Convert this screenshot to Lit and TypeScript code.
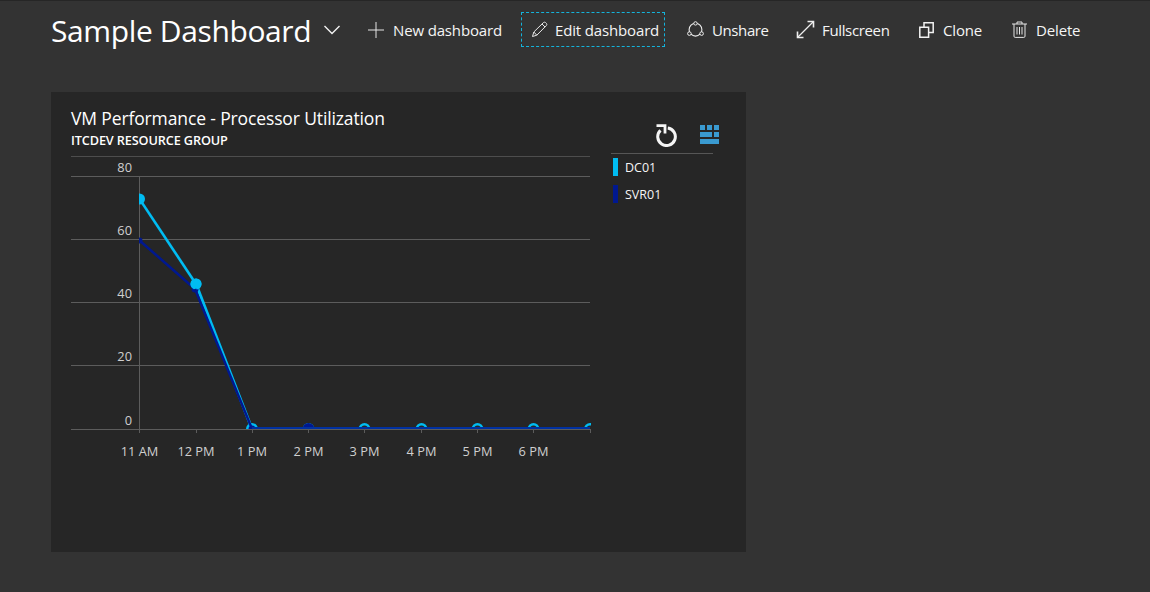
import { LitElement, html, css, svg } from "lit";
import { customElement } from "lit/decorators.js";

const xs = [139.5, 196, 252, 308.5, 364.5, 421.5, 477.5, 533.5, 590];
const labels = ["11 AM", "12 PM", "1 PM", "2 PM", "3 PM", "4 PM", "5 PM", "6 PM"];
const grid = [
  { y: 176, t: "80" },
  { y: 239, t: "60" },
  { y: 302, t: "40" },
  { y: 365, t: "20" },
  { y: 429, t: "0" },
];
const OX = 71;
const OY = 156;
const dc = [[139.5, 199], [196, 284], ...xs.slice(2).map((x) => [x, 429])];
const svr = [[139.5, 240.5], [195, 289], ...xs.slice(2).map((x) => [x, 429])];
const pts = (a: number[][]) => a.map(([x, y]) => `${x - OX},${y - OY}`).join(" ");

@customElement("app-root")
export class AppRoot extends LitElement {
  static styles = css`
    :host {
      display: block;
      width: 1150px;
      height: 592px;
      background: #333333;
      color: #fff;
      font-family: "Open Sans", "Noto Sans", sans-serif;
      overflow: hidden;
      box-sizing: border-box;
      border-top: 1px solid #262626;
    }
    .head {
      display: flex;
      align-items: center;
      height: 57px;
      padding-left: 51px;
      box-sizing: border-box;
    }
    h1 {
      margin: 2px 0 0;
      font-size: 30px;
      font-weight: 400;
      width: 260px;
      white-space: nowrap;
      letter-spacing: -0.38px;
    }
    .chev {
      margin: 0 27px 0 12px;
      display: block;
    }
    .btn {
      display: flex;
      align-items: center;
      height: 35px;
      box-sizing: border-box;
      font-size: 15px;
      color: #f5f5f5;
      white-space: nowrap;
      letter-spacing: -0.15px;
    }
    .btn svg {
      display: block;
      flex: none;
    }
    .btn span {
      display: block;
    }
    .new { width: 153px; gap: 9px; }
    .edit {
      width: 144px;
      padding-left: 9px;
      gap: 7px;
      border: 1px dashed #14b4dc;
      margin-right: 22px;
    }
    .unshare { width: 109px; gap: 8px; letter-spacing: -0.4px; }
    .full { width: 123px; gap: 7px; letter-spacing: -0.35px; }
    .clone { width: 93px; gap: 9px; }
    .del { gap: 9px; }
    .card {
      margin: 34px 0 0 51px;
      width: 695px;
      height: 460px;
      background: #262626;
      display: grid;
      grid-template-columns: 540px 1fr;
      box-sizing: border-box;
      padding-left: 20px;
    }
    .main { display: flex; flex-direction: column; }
    .title {
      margin-top: 14px;
      font-size: 17.5px;
      line-height: 24px;
      letter-spacing: -0.13px;
      white-space: nowrap;
    }
    .sub {
      font-size: 12.7px;
      font-weight: 600;
      line-height: 16px;
      margin-top: 2px;
      letter-spacing: -0.12px;
      white-space: nowrap;
    }
    .plot {
      display: block;
      margin-top: 8px;
    }
    .plot text {
      font-family: "Open Sans", "Noto Sans", sans-serif;
      font-size: 12.8px;
      fill: #cfcfcf;
    }
    .side {
      width: 102px;
      display: flex;
      flex-direction: column;
    }
    .tools {
      display: flex;
      justify-content: flex-end;
      align-items: flex-start;
      gap: 23px;
      height: 61px;
      box-sizing: border-box;
      padding-top: 31px;
      margin-right: -7px;
    }
    .tools .grid { margin-top: 2px; }
    .rule {
      height: 1px;
      background: #565656;
      margin-bottom: 4px;
    }
    .leg {
      display: flex;
      align-items: center;
      gap: 7px;
      height: 18px;
      font-size: 12.5px;
      color: #f5f5f5;
      margin-bottom: 9px;
      padding-left: 2px;
    }
    .swatch { width: 5px; height: 18px; flex: none; }
    .c1 { background: #00bcf2; }
    .c2 { background: #00188f; }
  `;

  render() {
    return html`
      <div class="head">
        <h1>Sample Dashboard</h1>
        <svg class="chev" width="18" height="12" viewBox="0 0 18 12"><path d="M1.5 2 L9 9.5 L16.5 2" fill="none" stroke="#f2f2f2" stroke-width="1.4"/></svg>
        <div class="btn new">
          <svg width="16" height="16" viewBox="0 0 16 16"><path d="M8 0V16M0 8H16" stroke="#e6e6e6" stroke-width="1"/></svg>
          <span>New dashboard</span>
        </div>
        <div class="btn edit">
          <svg width="17" height="17" viewBox="0 0 17 17"><path d="M1.5 15.5 L2.8 11 L12.5 1.5 Q13.5 .8 14.6 1.6 L15.5 2.5 Q16.2 3.6 15.4 4.5 L5.8 14.2 Z M11 3 L14 6 M2.8 11 L5.8 14.2" fill="none" stroke="#e6e6e6" stroke-width="1"/></svg>
          <span>Edit dashboard</span>
        </div>
        <div class="btn unshare">
          <svg width="17" height="17" viewBox="0 0 17 17"><circle cx="8.5" cy="8.7" r="6.4" fill="none" stroke="#eeeeee" stroke-width="1.1"/><circle cx="8.5" cy="2.4" r="1.7" fill="#333" stroke="#eeeeee"/><circle cx="2.4" cy="12.6" r="1.8" fill="#333" stroke="#eeeeee"/><circle cx="14.6" cy="12.6" r="1.8" fill="#333" stroke="#eeeeee"/></svg>
          <span>Unshare</span>
        </div>
        <div class="btn full">
          <svg width="19" height="19" viewBox="0 0 19 19"><path d="M2 17 L17 2" fill="none" stroke="#eeeeee" stroke-width="1.3"/><path d="M11.5 1.5 H17.5 V7.5 M1.5 11.5 V17.5 H7.5" fill="none" stroke="#eeeeee" stroke-width="1.6"/></svg>
          <span>Fullscreen</span>
        </div>
        <div class="btn clone">
          <svg width="15" height="16" viewBox="0 0 15 16"><path d="M5 5 V.8 H14.2 V10.5 H10 M.8 5.2 H9.6 V15.2 H.8 Z" fill="none" stroke="#f2f2f2" stroke-width="1.5"/></svg>
          <span>Clone</span>
        </div>
        <div class="btn del">
          <svg width="15" height="17" viewBox="0 0 15 17"><path d="M0 3H15M5 3V1H10V3M2 3V15.2Q2 16.4 3.2 16.4H11.8Q13 16.4 13 15.2V3M5 6V13.5M7.5 6V13.5M10 6V13.5" fill="none" stroke="#e6e6e6" stroke-width="1"/></svg>
          <span>Delete</span>
        </div>
      </div>
      <div class="card">
        <div class="main">
          <div class="title">VM Performance - Processor Utilization</div>
          <div class="sub">ITCDEV RESOURCE GROUP</div>
          <svg class="plot" width="525" height="310" viewBox="0 0 525 310">
            <defs>
              <clipPath id="pc"><rect x="${139 - OX}" y="0" width="${590 - 139 + 1}" height="${429 - OY}"></rect></clipPath>
            </defs>
            <line x1="0" x2="519" y1=".5" y2=".5" stroke="#4d4d4d"></line>
            ${grid.map(
              (g) => svg`
                <line x1="0" x2="519" y1=${g.y - OY + 0.5} y2=${g.y - OY + 0.5} stroke="#5c5c5c"></line>
                <text x=${132 - OX} y=${g.y - OY - 4} text-anchor="end">${g.t}</text>
              `
            )}
            <line x1=${139.5 - OX} x2=${139.5 - OX} y1=${176 - OY} y2=${433 - OY} stroke="#5c5c5c"></line>
            ${xs.slice(1).map(
              (x) => svg`<line x1=${Math.floor(x) - OX + 0.5} x2=${Math.floor(x) - OX + 0.5} y1=${429 - OY} y2=${433 - OY} stroke="#5c5c5c"></line>`
            )}
            ${labels.map(
              (t, i) => svg`<text x=${xs[i] - OX} y=${456 - OY} text-anchor="middle">${t}</text>`
            )}
            <g clip-path="url(#pc)">
              <polyline points=${pts(dc.slice(0, 2))} fill="none" stroke="#00bcf2" stroke-width="2.6"></polyline>
              <polyline points=${pts(svr.slice(0, 2))} fill="none" stroke="#00188f" stroke-width="2.5"></polyline>
              <polyline points=${pts(dc.slice(1, 3))} fill="none" stroke="#00bcf2" stroke-width="3"></polyline>
              ${dc.slice(2).map(([x, y]) => svg`<circle cx=${x - OX} cy=${y - OY} r="6" fill="#00bcf2"></circle>`)}
              ${dc.slice(0, 2).map(([x, y]) => svg`<circle cx=${x - OX} cy=${y - OY} r="5.5" fill="#00bcf2"></circle>`)}
              <circle cx=${195 - OX} cy=${289 - OY} r="3.5" fill="#00188f"></circle>
              <circle cx=${196 - OX} cy=${284 - OY} r="5.5" fill="#00bcf2"></circle>
              <circle cx=${139.5 - OX} cy=${240.5 - OY} r="3" fill="#00188f"></circle>
              ${svr.slice(2).map(([x, y], i) => svg`<circle cx=${x - OX} cy=${y - OY} r=${i === 1 ? 6 : 3.5} fill=${i > 1 ? "#262626" : "#00188f"}></circle>`)}
              <polyline points=${pts(svr.slice(1, 3))} fill="none" stroke="#00188f" stroke-width="2.5"></polyline>
              <line x1=${252 - OX} x2=${590 - OX} y1=${428 - OY} y2=${428 - OY} stroke="#0030a0" stroke-width="2"></line>
            </g>
          </svg>
        </div>
        <div class="side">
          <div class="tools">
            <svg width="22" height="24" viewBox="0 0 22 24"><path d="M5.5 7.3 A8.8 8.8 0 1 0 12.8 5" fill="none" stroke="#f5f5f5" stroke-width="3"/><path d="M1.5 2.6 H10 V10.5" fill="none" stroke="#f5f5f5" stroke-width="2.8"/></svg>
            <svg class="grid" width="20" height="20" viewBox="0 0 20 20" fill="#3a9ad0"><rect x="0" y="0" width="5" height="5"/><rect x="7" y="0" width="5" height="5"/><rect x="14" y="0" width="5" height="5"/><rect x="0" y="7" width="12" height="5"/><rect x="14" y="7" width="5" height="5"/><rect x="0" y="14" width="19" height="5"/></svg>
          </div>
          <div class="rule"></div>
          <div class="leg"><div class="swatch c1"></div>DC01</div>
          <div class="leg"><div class="swatch c2"></div>SVR01</div>
        </div>
      </div>
    `;
  }
}
